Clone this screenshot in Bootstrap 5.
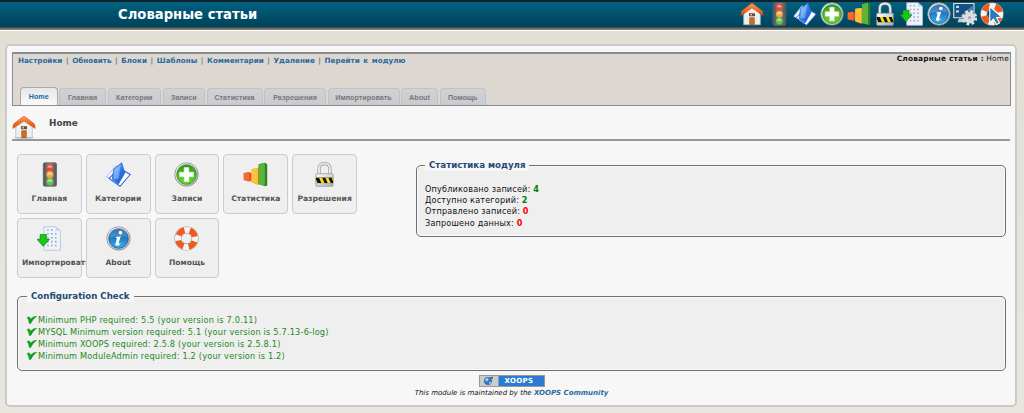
<!DOCTYPE html>
<html lang="ru">
<head>
<meta charset="utf-8">
<meta name="viewport" content="width=device-width, initial-scale=1">
<title>Словарные статьи</title>
<link href="https://cdn.jsdelivr.net/npm/bootstrap@5.3.0/dist/css/bootstrap.min.css" rel="stylesheet">
<style>
body{font:8px/11px "DejaVu Sans",Verdana,sans-serif;color:#111;background:linear-gradient(#e1dfd3,#e9e6df);height:413px;overflow:hidden}
a{text-decoration:none;color:#2a6a9f}
.topbar{height:31px;border-top:2px solid #10222c;border-bottom:1px solid #fff;background:linear-gradient(#006280,#00425a 25px,#69655a 26px,#8c8779 28px)}
.site-title{font-size:13.2px;line-height:25px;font-weight:700;color:#fff;margin-left:118px}
.quick{margin-right:20px;gap:2.7px}
.quick svg{width:24px;height:24px}
.shell{margin:13px 7px 0 5px;height:363px;border:2px solid #c9cac9;border-radius:5px;background:#f7f7f7;padding:6px 4px 0 5px}
.modhead{height:54px;border:1px solid #8b8b89;border-top-width:2px;background:#dcd8d1;padding:0 1px 0 5px}
.links{font-size:7.2px;font-weight:700;line-height:13px;color:#777;word-spacing:1.1px}
.crumb{font-size:7.4px;line-height:10px;color:#111;letter-spacing:.2px}
.tabs{gap:1.5px;padding-left:2px}
.tab{height:17px;border:1px solid #c2c2c5;border-bottom:0;border-radius:4px 4px 0 0;background:linear-gradient(#d0d1d5,#c9cbd0);color:#777;font:700 7.2px/18px "Liberation Sans",Arial,sans-serif;text-align:center}
.tab.on{height:18px;background:linear-gradient(#e4e6e8,#fafafa);color:#2065a8;border-color:#aaa}
.pagehead{height:35px;border-bottom:2px solid #979999;margin-right:1px}
.pagehead svg{width:24px;height:24px;margin-top:9px}
.pagehead b{font-size:8.9px;line-height:12px;color:#444;margin:11px 0 0 13px}
.tiles{width:350px;gap:4px;margin:13px 0 0 5px}
.tile{width:64.8px;height:60px;border:1px solid #ccc;border-radius:4px;background:#efefef;color:#555;font-size:7.6px;font-weight:700;line-height:10px;padding:7px 0 0;white-space:nowrap;position:relative}
.tile svg{width:25px;height:25px;display:block;margin:0 auto 7px}
.tile.long{padding-left:4px}
.tile.long svg{margin-left:15px}
.box{border:1px solid #707070;border-radius:5px;background:#efefef;box-shadow:inset 0 0 0 1px #fafafa}
.box legend{float:none;width:auto;font-size:8.65px;line-height:12px;font-weight:700;color:#234a73;background:#f7f7f7;margin:0;padding:0 4px}
.stats{width:590px;height:78px;margin:18px 5px 0 0;padding:0 8px}
.stats p{margin:0;line-height:11.2px;font-size:8.1px;letter-spacing:.19px}
.stats div{padding-top:13px}
.g{color:#008000}.r{color:#f00}
.conf{margin:12px 5px 0 5px;height:81px;padding:0 9px;color:#1b8a1b}
.conf div{padding-top:12px}
.conf p{margin:0;line-height:12px;height:12px;font-size:8.2px;letter-spacing:.19px;white-space:nowrap}
.conf p svg{width:10px;height:8px;margin-right:1px}
.xo{width:66px;height:12px;border:1px solid #999;background:linear-gradient(90deg,#ccc 18px,#2c7bd0 19px);color:#fff;font-size:7px;line-height:10px;font-weight:700;margin:4px auto 0;letter-spacing:.3px}
.xo svg{width:11px;height:10px;margin:0 11px 0 3px}
.foot{font-size:7px;font-style:italic;text-align:center;line-height:13px}
</style>
<script src="https://cdn.jsdelivr.net/npm/bootstrap@5.3.0/dist/js/bootstrap.bundle.min.js"></script>
</head>
<body>
<svg width="0" height="0" style="position:absolute">
<defs>
<linearGradient id="gr" x2="0" y2="1"><stop stop-color="#ff9a4a"/><stop offset="1" stop-color="#e04a00"/></linearGradient>
<linearGradient id="gg" x2="0" y2="1"><stop stop-color="#2d9a1c"/><stop offset="1" stop-color="#6ddc2c"/></linearGradient>
<linearGradient id="gs" x2="1" y2="1"><stop stop-color="#fff"/><stop offset="1" stop-color="#a9adb3"/></linearGradient>
<linearGradient id="gb" x2="0" y2="1"><stop stop-color="#0a4f9c"/><stop offset="1" stop-color="#36b2f2"/></linearGradient>
<linearGradient id="gk" x2="1"><stop stop-color="#4d4d4d"/><stop offset=".5" stop-color="#8b8b8b"/><stop offset="1" stop-color="#505050"/></linearGradient>
<linearGradient id="gd" x2="1" y2="1"><stop stop-color="#a6d4ff"/><stop offset=".5" stop-color="#2f7fe6"/><stop offset="1" stop-color="#1746d0"/></linearGradient>
<symbol id="home" viewBox="0 0 32 32"><ellipse cx="16" cy="30" rx="13" ry="2" fill="#777" opacity=".5"/><path d="M5 16 16 6l11 10v14H5z" fill="#eef0f1" stroke="#bbb"/><path d="M13 21h6v9h-6z" fill="#d56c1e" stroke="#9c5a2c"/><path d="M12 15h8v4h-8z" fill="#6d4b38"/><path d="M14 16h2v2h-2z" fill="#f3c49c"/><path d="m1 18 1-6L15 2h2l13 10 1 6L16 8z" fill="url(#gr)" stroke="#c24a13" stroke-width=".7"/></symbol>
<symbol id="light" viewBox="0 0 32 32"><rect x="8" y="1" width="17" height="30" rx="2" fill="url(#gk)" stroke="#666"/><circle cx="16.500" cy="7" r="4.500" fill="#e8493c"/><circle cx="16.500" cy="16" r="4.500" fill="#f5a93c"/><circle cx="16.500" cy="25" r="4.500" fill="#5ccc3b"/><path d="M13 7q3.500-6 7 0zM13 16q3.500-6 7 0zM13 25q3.500-6 7 0z" fill="#fff" opacity=".55"/></symbol>
<symbol id="cat" viewBox="0 0 32 32"><path d="M1 19 12 5l16 10-10 15z" fill="#f4f9ff" stroke="#8fb4ee"/><path d="M4 21 17 8l14 8-13 15z" fill="#fff" stroke="#2c5fe0" stroke-width="1.300"/><path d="M10 9 20 1l4 13-8 14-8-6z" fill="url(#gd)" stroke="#2863da"/><path d="m11 10 8-7-3 18-6 1z" fill="#fff" opacity=".3"/></symbol>
<symbol id="add" viewBox="0 0 32 32"><circle cx="16" cy="16" r="15" fill="url(#gs)" stroke="#888"/><circle cx="16" cy="16" r="12.500" fill="url(#gg)" stroke="#378322"/><path d="M13 7h6v6h6v6h-6v6h-6v-6H7v-6h6z" fill="#fff" stroke="#e5efe2" stroke-width=".6"/></symbol>
<symbol id="stat" viewBox="0 0 32 32"><path d="m1 14 7-1 3 1v10l-3 1-7-2z" fill="#d9531f"/><path d="m1 14 7-1v11l-7-1z" fill="#f4683a"/><path d="m11 9 8-1 3 1v19l-3 1-8-3z" fill="#e99a15"/><path d="m11 9 8-1v20l-8-2z" fill="#ffc03e"/><path d="m20 3 8-2 3 2v27l-3 1-8-3z" fill="#2b8320"/><path d="m20 3 8-2v29l-8-2z" fill="#5cb53a"/></symbol>
<symbol id="lock" viewBox="0 0 32 32"><path d="M9 16V9q0-7 7-7t7 7v7" fill="none" stroke="#8e9194" stroke-width="4"/><path d="M9 16V9q0-7 7-7t7 7v7" fill="none" stroke="#e6e8e9" stroke-width="2.500"/><rect x="5" y="15" width="22" height="16" rx="1" fill="url(#gs)" stroke="#999"/><path d="M5 20h22v7H5z" fill="#111"/><path d="m9 20 3 7h4l-3-7zM17 20l3 7h4l-3-7zM25 20l2 5v-5zM5 22l2 5H5z" fill="#f7df16"/></symbol>
<symbol id="imp" viewBox="0 0 32 32"><path d="M9 1h15l6 5v25H9z" fill="#eef3fa" stroke="#b4c0d4"/><path d="m24 1 6 5h-6z" fill="#c5d2e5"/><path d="M13 5h9M13 10h14M13 15h14M13 20h14M13 25h14" stroke="#94a6c6" stroke-width="2" stroke-dasharray="2 3"/><path d="M4 11h8v6h4l-8 9-8-9h4z" fill="#16c916" stroke="#128a1a"/></symbol>
<symbol id="info" viewBox="0 0 32 32"><circle cx="16" cy="16" r="15" fill="url(#gs)" stroke="#858b95"/><circle cx="16" cy="16" r="12.500" fill="url(#gb)" stroke="#174f8c"/><path d="M4 15a12 12 0 0 1 24-1q-11-3-24 1" fill="#fff" opacity=".2"/><circle cx="18.500" cy="8.500" r="2.300" fill="#fff"/><path d="m12 14 7-1-3 9q1 1 3-1-2 5-6 4-2-1 0-5l1-4z" fill="#fff"/></symbol>
<symbol id="help" viewBox="0 0 32 32"><circle cx="16" cy="16" r="11" fill="none" stroke="#9b9b9b" stroke-width="9"/><circle cx="16" cy="16" r="11" fill="none" stroke="#f4f4f4" stroke-width="7.500"/><circle cx="16" cy="16" r="11" fill="none" stroke="#ee591e" stroke-width="7.500" stroke-dasharray="10.280 7" stroke-dashoffset="-4"/></symbol>
<symbol id="conf" viewBox="0 0 32 32"><path d="M1 2h27v19H1z" fill="#174f82" stroke="#d9e2e9" stroke-width="1.500"/><path d="M4 5h4v3H4zM4 11h4v3H4z" fill="#b9d8ef"/><path d="M9 19 27 4v15z" fill="#5d9bc4" opacity=".6"/><path d="M8 22h11l2 5H6z" fill="#c7cdd1"/><circle cx="22" cy="21" r="8.500" fill="none" stroke="#e2e3e5" stroke-width="3.500" stroke-dasharray="3.600 3.080"/><circle cx="22" cy="21" r="5.300" fill="#e9e9eb" stroke="#dcdde0" stroke-width="4.500"/><circle cx="22" cy="21" r="2.300" fill="#a5afb8"/></symbol>
<symbol id="check" viewBox="0 0 22 18"><path d="M0 3 5 2l3 5Q13 1 22 0 12 7 8 17H5Q4 8 0 3z" fill="#07a514" stroke="#08850f"/></symbol>
</defs></svg>
<header class="topbar d-flex justify-content-between">
<div class="site-title">Словарные статьи</div>
<nav class="quick d-flex">
<svg><use href="#home"/></svg><svg><use href="#light"/></svg><svg><use href="#cat"/></svg><svg><use href="#add"/></svg><svg><use href="#stat"/></svg><svg><use href="#lock"/></svg><svg><use href="#imp"/></svg><svg><use href="#info"/></svg><svg><use href="#conf"/></svg>
<svg viewBox="0 0 32 32"><use href="#help"/><path d="m13 6 16 14-7 1 4 7-4 2-4-7-5 5z" fill="#2878bc" stroke="#fff" stroke-width="1.500"/></svg>
</nav>
</header>
<main class="shell">
<section class="modhead d-flex flex-column justify-content-between">
<div class="d-flex justify-content-between">
<div class="links"><a href="#">Настройки</a> | <a href="#">Обновить</a> | <a href="#">Блоки</a> | <a href="#">Шаблоны</a> | <a href="#">Комментарии</a> | <a href="#">Удаление</a> | <a href="#">Перейти к модулю</a></div>
<div class="crumb"><b>Словарные статьи :</b> Home</div>
</div>
<div class="tabs d-flex align-items-end">
<div class="tab on" style="width:37.5px">Home</div><div class="tab" style="width:47px">Главная</div><div class="tab" style="width:53.5px">Категории</div><div class="tab" style="width:42.5px">Записи</div><div class="tab" style="width:56px">Статистика</div><div class="tab" style="width:62px">Разрешения</div><div class="tab" style="width:72px">Импортировать</div><div class="tab" style="width:37px">About</div><div class="tab" style="width:46.5px">Помощь</div>
</div>
</section>
<div class="pagehead d-flex align-items-start"><svg><use href="#home"/></svg><b>Home</b></div>
<div class="d-flex justify-content-between align-items-start">
<div class="tiles d-flex flex-wrap">
<div class="tile text-center"><svg><use href="#light"/></svg>Главная</div>
<div class="tile text-center"><svg><use href="#cat"/></svg>Категории</div>
<div class="tile text-center"><svg><use href="#add"/></svg>Записи</div>
<div class="tile text-center"><svg><use href="#stat"/></svg>Статистика</div>
<div class="tile text-center"><svg><use href="#lock"/></svg>Разрешения</div>
<div class="tile long"><svg><use href="#imp"/></svg>Импортировать</div>
<div class="tile text-center"><svg><use href="#info"/></svg>About</div>
<div class="tile text-center"><svg><use href="#help"/></svg>Помощь</div>
</div>
<fieldset class="box stats"><legend>Статистика модуля</legend><div>
<p>Опубликовано записей: <b class="g">4</b></p><p>Доступно категорий: <b class="g">2</b></p><p>Отправлено записей: <b class="r">0</b></p><p>Запрошено данных: <b class="r">0</b></p></div></fieldset>
</div>
<fieldset class="box conf"><legend>Configuration Check</legend><div>
<p class="d-flex align-items-center"><svg><use href="#check"/></svg>Minimum PHP required: 5.5 (your version is 7.0.11)</p>
<p class="d-flex align-items-center"><svg><use href="#check"/></svg>MYSQL Minimum version required: 5.1 (your version is 5.7.13-6-log)</p>
<p class="d-flex align-items-center"><svg><use href="#check"/></svg>Minimum XOOPS required: 2.5.8 (your version is 2.5.8.1)</p>
<p class="d-flex align-items-center"><svg><use href="#check"/></svg>Minimum ModuleAdmin required: 1.2 (your version is 1.2)</p></div></fieldset>
<div class="xo d-flex"><svg viewBox="0 0 20 20"><circle cx="9" cy="10" r="8" fill="#2f75bd"/><path d="M3 6q6-4 7 0t-5 5zM11 13q4-3 5 0l-4 4z" fill="#a9cdec"/><path d="m13 3 5-2 1 5z" fill="#345"/></svg>XOOPS</div>
<div class="foot">This module is maintained by the <a href="#"><b>XOOPS Community</b></a></div>
</main>
</body>
</html>
